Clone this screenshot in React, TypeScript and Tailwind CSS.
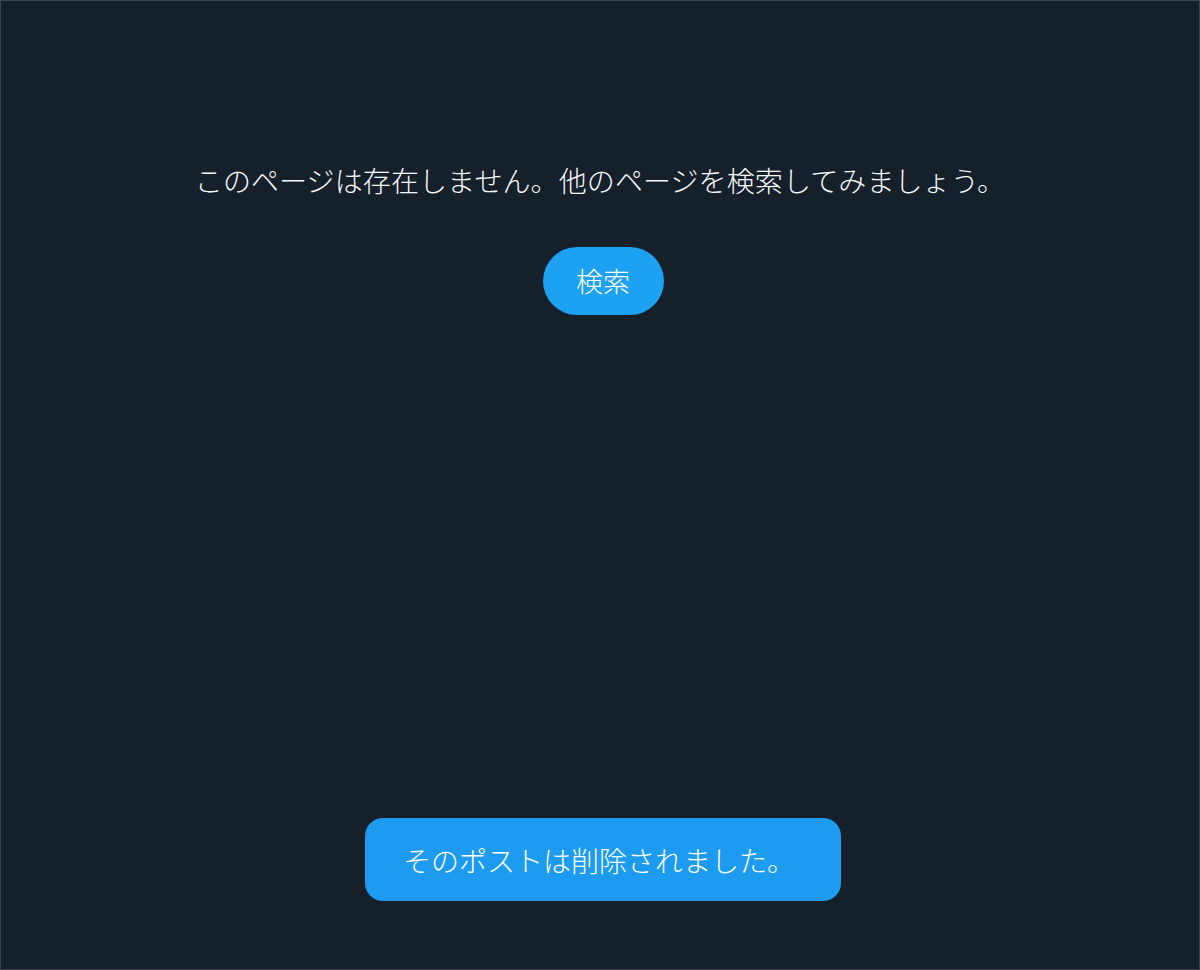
export default function App() {
  return (
    <div
      className="flex h-[970px] w-full flex-col items-center border border-[#3d4650] bg-[#15202b] text-white"
      style={{ fontFamily: '"Noto Sans CJK JP", "Noto Sans", sans-serif' }}
    >
      <p className="mt-[158px] text-[28px] font-light leading-[42px] tracking-[0.1px] text-[#f5f8fa]">
        このページは存在しません。他のページを検索してみましょう。
      </p>
      <button className="ml-[6px] mt-[46px] flex h-[68px] w-[121px] items-center justify-center rounded-full bg-[#1da1f2] text-[27px] font-light text-white">
        検索
      </button>
      <div className="flex-1" />
      <div className="mb-[68px] ml-[6px] flex h-[83px] w-[476px] items-center rounded-[18px] bg-[#1d9bf0] pl-[38px] text-[28px] font-light text-white">
        そのポストは削除されました。
      </div>
    </div>
  );
}
